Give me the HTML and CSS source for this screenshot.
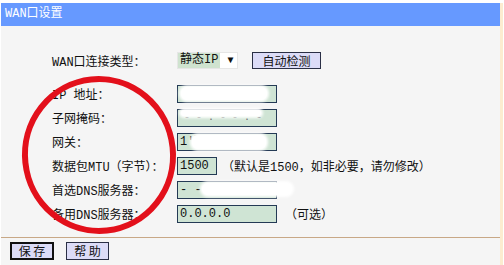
FILE: index.html
```html
<!DOCTYPE html>
<html lang="zh-CN">
<head>
  <meta charset="UTF-8"/>
  <title>WAN口设置</title>
  <link rel="stylesheet" href="styles.css">
</head>
<body>
  <div class="page">
    <div class="panel">
      <div class="title">WAN口设置</div>
      <div class="form">
        <div class="row first">
          <span class="label">WAN口连接类型：</span>
          <div class="select"><span class="opt">静态IP</span><span class="arrow">&#9660;</span></div>
          <span class="btn detect">自动检测</span>
        </div>
        <div class="row">
          <span class="label">IP 地址：</span>
          <div class="field"><span class="val faint">.' - .' - .' -</span><span class="smudge s1"></span></div>
        </div>
        <div class="row">
          <span class="label">子网掩码：</span>
          <div class="field"><span class="val faint">- - . - - . -</span><span class="smudge s2"></span></div>
        </div>
        <div class="row">
          <span class="label">网关：</span>
          <div class="field"><span class="val">1'&#175;</span><span class="smudge s3"></span></div>
        </div>
        <div class="row">
          <span class="label">数据包MTU（字节）：</span>
          <div class="field short"><span class="val">1500</span></div>
          <span class="note">（默认是1500，如非必要，请勿修改）</span>
        </div>
        <div class="row">
          <span class="label">首选DNS服务器：</span>
          <div class="field"><span class="val">- - - .</span><span class="smudge s4"></span></div>
        </div>
        <div class="row">
          <span class="label">备用DNS服务器：</span>
          <div class="field"><span class="val">0.0.0.0</span></div>
          <span class="note opt-note">（可选）</span>
        </div>
      </div>
    </div>
    <div class="actions">
      <span class="btn save">保 存</span>
      <span class="btn">帮 助</span>
    </div>
  </div>
  <svg class="mark" width="504" height="265" viewBox="0 0 504 265">
    <ellipse cx="99" cy="155" rx="74" ry="76" fill="none" stroke="#e3101b" stroke-width="6" transform="rotate(-6 99 155)"/>
  </svg>
</body>
</html>
```

FILE: styles.css
```css
*{margin:0;padding:0;box-sizing:border-box;}
html{background:#fff;}
body{font-family:"Liberation Mono","Noto Sans CJK SC",monospace;font-size:12px;color:#111;width:504px;height:265px;overflow:hidden;position:relative;}
.page{margin:3px 0 0 1px;width:502px;height:262px;background:#f5f5f5;border-right:3px solid #fcecd0;}
.panel{border-bottom:1px solid #c8a886;}
.title{height:23px;line-height:23px;background:#6699ff;color:#fff;padding-left:4px;}
.form{display:flex;flex-direction:column;gap:6px;padding:26px 0 14px 51px;}
.row{display:flex;align-items:center;height:18px;}
.row.first{margin-bottom:10px;height:17px;}
.label{width:125px;white-space:nowrap;}
.select{display:flex;align-items:center;width:61px;height:17px;background:#fff;border:1px solid #e6e6e6;}
.opt{background:#cfe3cf;padding:0 2px;height:15px;line-height:15px;}
.arrow{font-size:10px;margin-left:7px;}
.btn{display:inline-block;height:17px;line-height:15px;padding:0 9px;background:#dcdcf7;border:1px solid #2a2f45;font-family:"Noto Sans CJK SC",sans-serif;}
.detect{margin-left:14px;width:69px;text-align:center;padding:0;}
.field{position:relative;width:100px;height:18px;background:#cfe4d4;border:1px solid #243a55;}
.field.short{width:40px;}
.val{display:block;line-height:16px;padding-left:2px;white-space:nowrap;}
.faint{color:#555;font-size:10px;padding-left:6px;}
.smudge{position:absolute;background:#fff;border-radius:6px;box-shadow:0 0 3px 2px #fff;}
.s1{left:3px;top:1px;width:86px;height:13px;}
.s2{left:3px;top:0;width:80px;height:6px;}
.s3{left:14px;top:1px;width:74px;height:14px;}
.s4{left:24px;top:1px;width:90px;height:12px;}
.note{margin-left:5px;white-space:nowrap;}
.opt-note{margin-left:8px;}
.actions{display:flex;gap:12px;padding:4px 0 0 9px;}
.actions .btn{height:18px;line-height:16px;width:43px;text-align:center;padding:0;}
.actions .save{border:2px solid #111;width:44px;line-height:14px;}
.mark{position:absolute;left:0;top:0;pointer-events:none;}
```
